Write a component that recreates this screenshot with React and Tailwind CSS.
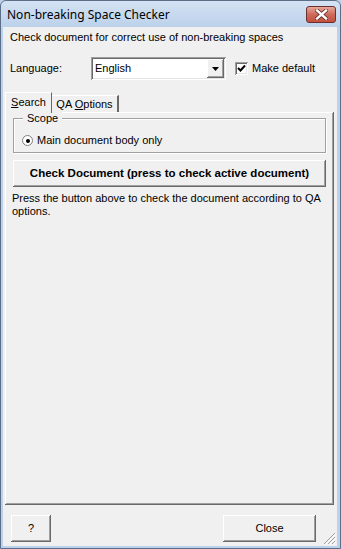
import React from "react";

const raised =
  "shadow-[inset_-1px_-1px_#696969,inset_1px_1px_#ffffff,inset_-2px_-2px_#a0a0a0,inset_2px_2px_#f0f0f0]";
const sunken =
  "shadow-[inset_1px_1px_#a0a0a0,inset_-1px_-1px_#ffffff,inset_2px_2px_#696969,inset_-2px_-2px_#e3e3e3]";

export default function App() {
  return (
    <div className="w-[341px] h-[549px] relative bg-[#bcd2ec] font-['Liberation_Sans',sans-serif] text-[11px] leading-[13px] text-black overflow-hidden">
      <div className="absolute inset-0 rounded-t-[6px] border border-[#5b6e86] pointer-events-none" />
      <div className="flex flex-col h-full">
        {/* Title bar */}
        <div className="h-[27px] flex items-center bg-gradient-to-b from-[#d5e3f4] to-[#bcd1ea] rounded-t-[6px]">
          <span className="pl-[7px] pt-[1px] text-[12px] font-['Noto_Sans',sans-serif] text-black">
            Non-breaking Space Checker
          </span>
          <div className="ml-auto mr-[5px] mt-[1px] w-[30px] h-[17px] rounded-[3px] border border-[#6b2f2f] bg-gradient-to-b from-[#e6a89a] via-[#cd6a5b] to-[#c4503f] flex items-center justify-center">
            <svg width="13" height="11" viewBox="0 0 13 11">
              <path d="M2 1.5 L11 9.5 M11 1.5 L2 9.5" stroke="#5a1e1a" strokeWidth="3.8" strokeLinecap="square" />
              <path d="M2 1.5 L11 9.5 M11 1.5 L2 9.5" stroke="#ffffff" strokeWidth="2.4" strokeLinecap="square" />
            </svg>
          </div>
        </div>

        {/* Client area */}
        <div className="flex-1 ml-[3px] mr-[4px] mb-[3px] bg-[#f0f0f0] flex flex-col relative">
          <div className="pl-[7px] mt-[4px]">Check document for correct use of non-breaking spaces</div>

          <div className="flex items-center mt-[13px] h-[23px]">
            <span className="pl-[7px] w-[88px]">Language:</span>
            <div className={`w-[135px] h-[23px] bg-white ${sunken} flex items-center pl-[4px] pr-[2px]`}>
              <span className="flex-1">English</span>
              <div className={`w-[17px] h-[19px] bg-[#f0f0f0] ${raised} flex items-center justify-center`}>
                <svg width="7" height="4" viewBox="0 0 7 4">
                  <path d="M0 0 H7 L3.5 4 Z" fill="#000" />
                </svg>
              </div>
            </div>
            <div className={`ml-[9px] w-[13px] h-[13px] bg-white ${sunken} flex items-center justify-center`}>
              <svg width="9" height="9" viewBox="0 0 9 9">
                <path d="M1 4 L3.5 6.5 L8 1.5" stroke="#000" strokeWidth="2" fill="none" />
              </svg>
            </div>
            <span className="ml-[4px]">Make default</span>
          </div>

          {/* Tabs */}
          <div className="flex items-end mt-[12px] ml-[2px] h-[20px]">
            <div className="relative z-10 h-[21px] w-[47px] bg-[#f0f0f0] border-t border-l border-white border-r border-r-[#696969] flex items-start pt-[3px] justify-center -mb-[1px]">
              <span>
                <span className="underline">S</span>earch
              </span>
            </div>
            <div className="h-[17px] w-[67px] bg-[#f0f0f0] border-t border-white border-r-2 border-r-[#696969] flex items-center justify-center">
              <span>
                QA <span className="underline">O</span>ptions
              </span>
            </div>
          </div>

          {/* Panel */}
          <div className={`ml-[2px] w-[329px] h-[393px] ${raised} bg-[#f0f0f0] flex flex-col px-[8px]`}>
            <div className="relative mt-[6px] h-[35px] border border-[#a0a0a0] shadow-[inset_1px_1px_#ffffff,1px_1px_#ffffff]">
              <span className="absolute -top-[7px] left-[9px] px-[4px] bg-[#f0f0f0]">Scope</span>
              <div className="flex items-center mt-[15px] ml-[8px]">
                <div className="w-[11px] h-[11px] rounded-full bg-white border border-[#808080] flex items-center justify-center">
                  <div className="w-[4px] h-[4px] rounded-full bg-black" />
                </div>
                <span className="ml-[4px]">Main document body only</span>
              </div>
            </div>
            <div className={`mt-[7px] h-[27px] ${raised} bg-[#f0f0f0] flex items-center justify-center font-bold text-[11.5px]`}>
              Check Document (press to check active document)
            </div>
            <div className="mt-[5px] -ml-[1px]">
              Press the button above to check the document according to QA options.
            </div>
          </div>

          {/* Bottom buttons */}
          <div className="flex mt-[10px] h-[27px]">
            <div className={`ml-[8px] w-[40px] h-[27px] ${raised} flex items-center justify-center`}>?</div>
            <div className={`ml-auto mr-[21px] w-[93px] h-[27px] ${raised} flex items-center justify-center`}>Close</div>
          </div>

          <svg className="absolute right-[1px] bottom-[1px]" width="14" height="14" viewBox="0 0 14 14">
            <path d="M13 2 L2 13 M13 6 L6 13 M13 10 L10 13" stroke="#a0a0a0" strokeWidth="1" />
            <path d="M14 3 L3 14 M14 7 L7 14 M14 11 L11 14" stroke="#ffffff" strokeWidth="1" />
          </svg>
        </div>
      </div>
    </div>
  );
}
